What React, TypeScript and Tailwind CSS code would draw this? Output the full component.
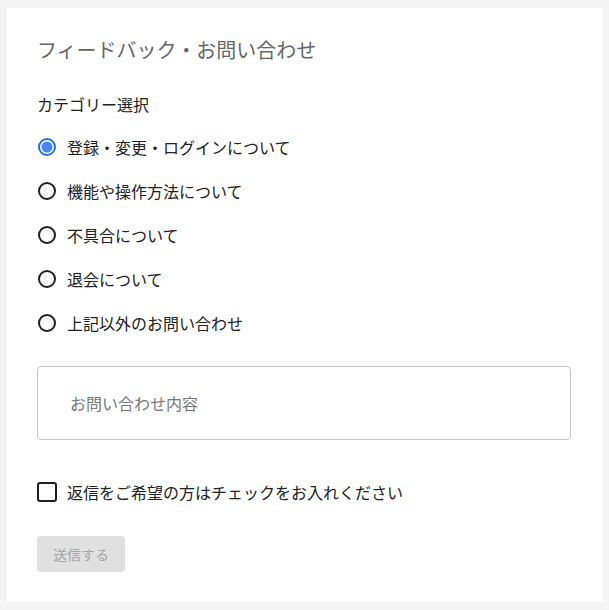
import { useState } from "react"

const categories = [
  "登録・変更・ログインについて",
  "機能や操作方法について",
  "不具合について",
  "退会について",
  "上記以外のお問い合わせ",
]

const font = { fontFamily: '"Noto Sans CJK JP", "Noto Sans", sans-serif' }

function RadioIcon({ checked }: { checked: boolean }) {
  return (
    <svg width="20" height="20" viewBox="0 0 20 20" className="shrink-0">
      <circle cx="10" cy="10" r="8" fill="none" stroke={checked ? "#1a73e8" : "#1f1f1f"} strokeWidth="2" />
      {checked && <circle cx="10" cy="10" r="5.5" fill="#4a86f0" />}
    </svg>
  )
}

export default function App() {
  const [selected, setSelected] = useState(0)
  const [reply, setReply] = useState(false)

  return (
    <div className="h-[610px] bg-[#f4f4f4] pt-[8px] pl-[7px]" style={font}>
      <div className="w-[595px] h-[594px] bg-white px-[30px] pt-[26px]">
        <h1 className="text-[20px] leading-[32px] text-[#666666]">フィードバック・お問い合わせ</h1>

        <p className="mt-[26px] text-[16px] leading-[24px] text-[#212121]">カテゴリー選択</p>

        <div className="mt-[9px] flex flex-col">
          {categories.map((c, i) => (
            <label
              key={c}
              className="flex h-[44px] items-center gap-[10px] cursor-pointer"
              onClick={() => setSelected(i)}
            >
              <RadioIcon checked={selected === i} />
              <span className="text-[16px] leading-[24px] text-[#212121]">{c}</span>
            </label>
          ))}
        </div>

        <div className="mt-[21px] flex h-[74px] w-[534px] items-center rounded-[4px] border border-[#c4c4c4] pl-[32px]">
          <span className="text-[16px] leading-[24px] text-[#777777]">お問い合わせ内容</span>
        </div>

        <label className="mt-[30px] flex h-[44px] items-center gap-[10px] cursor-pointer" onClick={() => setReply(!reply)}>
          <span className="h-[20px] w-[20px] shrink-0 rounded-[3px] border-2 border-[#1f1f1f]" />
          <span className="text-[16px] leading-[24px] text-[#212121]">返信をご希望の方はチェックをお入れください</span>
        </label>

        <button
          disabled
          className="mt-[22px] h-[36px] w-[88px] rounded-[4px] bg-[#e0e0e0] text-[14px] text-[#a6a6a6]"
        >
          送信する
        </button>
      </div>
    </div>
  )
}
